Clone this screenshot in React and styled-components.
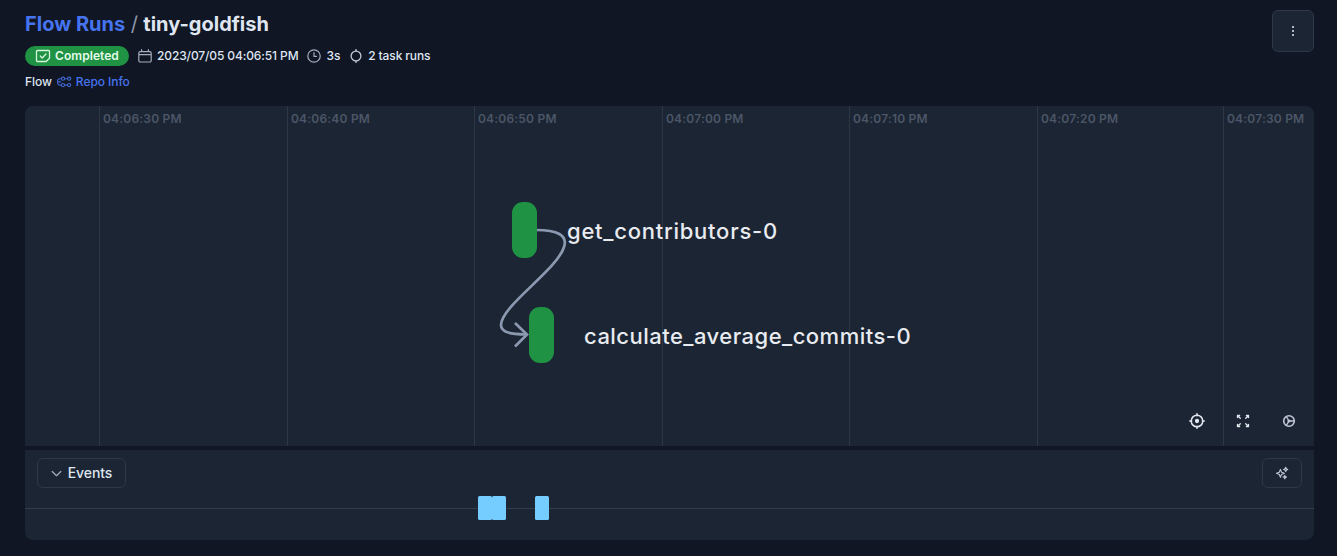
import React from 'react';
import styled, { createGlobalStyle } from 'styled-components';

const GlobalStyle = createGlobalStyle`
  *, *::before, *::after { box-sizing: border-box; }
  body {
    margin: 0;
    background: #101623;
    font-family: Inter, "Liberation Sans", sans-serif;
    color: #dfe5f1;
    -webkit-font-smoothing: antialiased;
  }
`;

const Page = styled.main`
  height: 556px;
  padding: 10px 23px 0 25px;
  overflow: hidden;
`;

const Header = styled.header`
  display: flex;
  justify-content: space-between;
  align-items: flex-start;
  height: 96px;
`;

const Title = styled.h1`
  display: flex;
  gap: 5.5px;
  margin: 0;
  font-size: 20px;
  line-height: 28px;
  font-weight: 700;
`;

const Crumb = styled.a`
  color: #4674f0;
`;

const Slash = styled.span`
  color: #8e99ab;
  font-weight: 400;
`;

const Meta = styled.div`
  display: flex;
  align-items: center;
  height: 20px;
  margin-top: 8px;
  font-size: 12px;
  font-weight: 500;
  letter-spacing: -0.12px;
`;

const Label = styled.span`
  line-height: 18px;
  padding-bottom: 1px;
`;

const Badge = styled.span`
  display: flex;
  align-items: center;
  gap: 4px;
  width: 104px;
  height: 20px;
  padding-left: 10px;
  border-radius: 10px;
  background: #1f9243;
  color: #e3fbe9;
  font-weight: 600;
  letter-spacing: 0.06px;
`;

const MetaItem = styled.span`
  display: flex;
  align-items: center;
  gap: 5px;
  margin-left: 9px;
  white-space: nowrap;
`;

const FlowLine = styled.div`
  display: flex;
  align-items: center;
  gap: 4px;
  height: 20px;
  margin-top: 6px;
  font-size: 12px;
  font-weight: 500;
  letter-spacing: -0.06px;
`;

const FlowLink = styled.a`
  display: flex;
  align-items: center;
  gap: 4px;
  color: #4674f0;
`;

const MenuButton = styled.button`
  display: grid;
  place-items: center;
  width: 42px;
  height: 42px;
  padding: 0;
  border: 1px solid #2d3848;
  border-radius: 6px;
  background: #1c2533;
`;

const Graph = styled.section`
  position: relative;
  height: 340px;
  border-radius: 8px 8px 0 0;
  background: #1c2533;
  overflow: hidden;
`;

const Ticks = styled.div`
  display: grid;
  grid-template-columns: 188px 187px 188px 187px 188px 186px 1fr;
  height: 100%;
  padding-left: 74px;
`;

const Tick = styled.div`
  padding: 5px 0 0 3px;
  border-left: 1px solid #2d3643;
  color: #4b5667;
  font-size: 12px;
  line-height: 16px;
  font-weight: 600;
  letter-spacing: 0.2px;
  white-space: nowrap;
`;

const Edge = styled.svg`
  position: absolute;
  left: 465px;
  top: 114px;
`;

const TaskNode = styled.div`
  position: absolute;
  left: ${(p) => p.$x}px;
  top: ${(p) => p.$y}px;
  display: flex;
  align-items: center;
  gap: 30px;
`;

const TaskBar = styled.span`
  width: 25px;
  height: 56px;
  border-radius: 11px;
  background: #1f9243;
`;

const TaskName = styled.span`
  padding-top: 2px;
  color: #e8ebf0;
  font-size: 22px;
  line-height: 28px;
  font-weight: 500;
  letter-spacing: ${(p) => p.$tracking}px;
`;

const Controls = styled.div`
  position: absolute;
  right: 17px;
  bottom: 17px;
  display: flex;
  gap: 30px;
`;

const Events = styled.section`
  height: 90px;
  margin-top: 4px;
  border-radius: 0 0 8px 8px;
  background: #1c2533;
`;

const EventsBar = styled.div`
  display: flex;
  justify-content: space-between;
  padding: 8px 12px 0;
`;

const OutlineButton = styled.button`
  display: flex;
  align-items: center;
  justify-content: center;
  gap: 6px;
  width: ${(p) => p.$width}px;
  height: 30px;
  padding: 0;
  border: 1px solid #2d3848;
  border-radius: 6px;
  background: transparent;
  color: #dfe5f1;
  font: 500 14px Inter, "Liberation Sans", sans-serif;
  letter-spacing: -0.1px;
`;

const Track = styled.div`
  display: flex;
  align-items: center;
  height: 24px;
  margin-top: 8px;
  padding-left: 453px;
  background: linear-gradient(#323c4b, #323c4b) 0 12px / 100% 1px no-repeat;
`;

const EventMark = styled.span`
  width: 14px;
  height: 24px;
  margin-left: ${(p) => p.$offset || 0}px;
  border-radius: 1.5px;
  background: #75cdff;
`;

const Icon = ({ size = 14, box = 24, width = 1.5, color = '#a3adbd', children }) => (
  <svg width={size} height={size} viewBox={`0 0 ${box} ${box}`} fill="none" stroke={color}
    strokeWidth={width} strokeLinecap="round" strokeLinejoin="round">
    {children}
  </svg>
);

const times = ['04:06:30 PM', '04:06:40 PM', '04:06:50 PM', '04:07:00 PM', '04:07:10 PM', '04:07:20 PM', '04:07:30 PM'];

export default function App() {
  return (
    <>
      <GlobalStyle />
      <Page>
        <Header>
          <div>
            <Title>
              <Crumb>Flow Runs</Crumb>
              <Slash>/</Slash>
              <span>tiny-goldfish</span>
            </Title>
            <Meta>
              <Badge>
                <Icon size={16} box={16} width={1.3} color="#d5f7de">
                  <path d="M2.5 2.5h11a1 1 0 0 1 1 1v6.7l-3.4 3.3H2.5a1 1 0 0 1-1-1v-9a1 1 0 0 1 1-1zM5.2 8l2 2 3.8-4" />
                </Icon>
                <Label>Completed</Label>
              </Badge>
              <MetaItem>
                <Icon box={14} width={1.2}>
                  <path d="M2.2 2.6h9.6a1.4 1.4 0 0 1 1.4 1.4v7.6a1.4 1.4 0 0 1-1.4 1.4H2.2a1.4 1.4 0 0 1-1.4-1.4V4a1.4 1.4 0 0 1 1.4-1.4zM.8 5.6h12.4M3.6.7v1.9M10.4.7v1.9" />
                </Icon>
                <Label>2023/07/05 04:06:51 PM</Label>
              </MetaItem>
              <MetaItem>
                <Icon box={14} width={1.2}>
                  <circle cx="7" cy="7" r="6.2" />
                  <path d="M7 3.5V7.4h2.4" />
                </Icon>
                <Label>3s</Label>
              </MetaItem>
              <MetaItem>
                <Icon box={14} width={1.3} color="#c0c8d5">
                  <circle cx="7" cy="7" r="4.9" />
                  <path d="M7 .4v1.7M7 11.9v1.7" />
                </Icon>
                <Label>2 task runs</Label>
              </MetaItem>
            </Meta>
            <FlowLine>
              <Label>Flow</Label>
              <FlowLink>
                <Icon size={16} box={16} width={1.1} color="#4067d2">
                  <circle cx="7" cy="4.7" r="1.6" />
                  <circle cx="13.2" cy="4.7" r="1.6" />
                  <circle cx="7" cy="11.1" r="1.6" />
                  <circle cx="13.2" cy="11.1" r="1.6" />
                  <path d="M8.6 4.7h3M8.6 11.1h3M5.4 4.7H4a2.4 2.4 0 0 0-2.4 2.4v1.6A2.4 2.4 0 0 0 4 11.1h1.4M1.6 7.9h3.2" />
                </Icon>
                <Label>Repo Info</Label>
              </FlowLink>
            </FlowLine>
          </div>
          <MenuButton aria-label="More">
            <svg width="2" height="10" fill="#aeb7c5">
              <rect width="2" height="2" />
              <rect y="4" width="2" height="2" />
              <rect y="8" width="2" height="2" />
            </svg>
          </MenuButton>
        </Header>

        <Graph>
          <Ticks>
            {times.map((t) => <Tick key={t}>{t}</Tick>)}
          </Ticks>
          <Edge width="90" height="140" fill="none" stroke="#8b99b0" strokeWidth="2.7" strokeLinecap="round">
            <path d="M46 10C67 10 78 15 74 27C67 50 11 86 11 105C11 113 22 114 36 114.5" />
            <path d="M25 103l12 11.5-12 12" strokeLinecap="butt" />
          </Edge>
          <TaskNode $x={487} $y={96}>
            <TaskBar />
            <TaskName $tracking={0.75}>get_contributors-0</TaskName>
          </TaskNode>
          <TaskNode $x={504} $y={201}>
            <TaskBar />
            <TaskName $tracking={0.47}>calculate_average_commits-0</TaskName>
          </TaskNode>
          <Controls>
            <Icon size={16} box={16} width={1.5} color="#e2e7ef">
              <circle cx="8" cy="8" r="5.8" />
              <circle cx="8" cy="8" r="1.4" fill="#e2e7ef" />
              <path d="M8 .7v2M8 13.3v2M.7 8h2M13.3 8h2" />
            </Icon>
            <Icon size={16} box={16} width={1.3} color="#e2e7ef">
              <path d="M2.5 4.6V2.5h2.1M2.7 2.7l2.6 2.6M11.4 2.5h2.1v2.1M13.3 2.7l-2.6 2.6M2.5 11.4v2.1h2.1M2.7 13.3l2.6-2.6M11.4 13.5h2.1v-2.1M13.3 13.3l-2.6-2.6" />
            </Icon>
            <Icon size={16} box={16} width={1.6} color="#c0c8d5">
              <circle cx="8" cy="8" r="5.3" />
              <path d="M8 8h5.2M8 8L5.4 3.6M8 8l-2.6 4.4" strokeWidth="1.3" />
              <circle cx="8" cy="8" r="1" strokeWidth="1.2" />
            </Icon>
          </Controls>
        </Graph>

        <Events>
          <EventsBar>
            <OutlineButton $width={89}>
              <Icon size={11} box={11} width={1.2}><path d="M1.2 3.5l4.3 4.2 4.3-4.2" /></Icon>
              <Label>Events</Label>
            </OutlineButton>
            <OutlineButton $width={40} aria-label="Generate">
              <Icon size={14} box={14} width={1.1} color="#c0c8d5">
                <path d="M5.4 3.4l1.2 2.8 2.8 1.1-2.8 1.1-1.2 2.8-1.1-2.8-2.8-1.1 2.8-1.1zM10.7 1.3l.6 1.5 1.5.6-1.5.6-.6 1.5-.6-1.5-1.5-.6 1.5-.6zM9.8 9.4l.5 1.2 1.2.5-1.2.5-.5 1.2-.5-1.2-1.2-.5 1.2-.5z" />
              </Icon>
            </OutlineButton>
          </EventsBar>
          <Track>
            <EventMark />
            <EventMark />
            <EventMark $offset={29} />
          </Track>
        </Events>
      </Page>
    </>
  );
}
